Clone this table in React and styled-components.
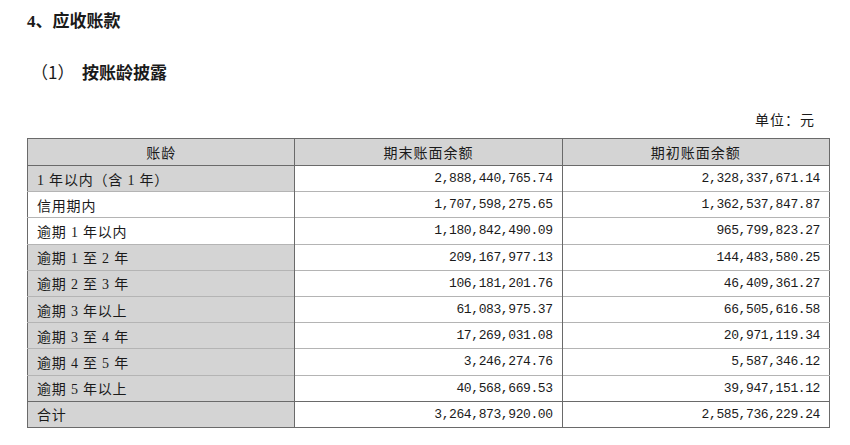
import React from "react";
import styled, { createGlobalStyle } from "styled-components";

const GlobalStyle = createGlobalStyle`
    body{
        margin:0;
        background:#ffffff;
        font-family: "Liberation Serif", "Noto Sans CJK SC", serif;
        color:#1a1a1a;
    }
`;

const rows = [
    { age: "1 年以内（含 1 年）", end: "2,888,440,765.74", begin: "2,328,337,671.14", shade: true },
    { age: "信用期内", end: "1,707,598,275.65", begin: "1,362,537,847.87", shade: false },
    { age: "逾期 1 年以内", end: "1,180,842,490.09", begin: "965,799,823.27", shade: false },
    { age: "逾期 1 至 2 年", end: "209,167,977.13", begin: "144,483,580.25", shade: true },
    { age: "逾期 2 至 3 年", end: "106,181,201.76", begin: "46,409,361.27", shade: true },
    { age: "逾期 3 年以上", end: "61,083,975.37", begin: "66,505,616.58", shade: true },
    { age: "逾期 3 至 4 年", end: "17,269,031.08", begin: "20,971,119.34", shade: true },
    { age: "逾期 4 至 5 年", end: "3,246,274.76", begin: "5,587,346.12", shade: true },
    { age: "逾期 5 年以上", end: "40,568,669.53", begin: "39,947,151.12", shade: true },
    { age: "合计", end: "3,264,873,920.00", begin: "2,585,736,229.24", shade: true, total: true },
];

export default function App() {
    return (
        <Page>
            <GlobalStyle />
            <Title>4、应收账款</Title>
            <SubTitle><span>（1）</span>按账龄披露</SubTitle>
            <Unit>单位：元</Unit>
            <Table>
                <thead>
                    <tr>
                        <Head>账龄</Head>
                        <Head>期末账面余额</Head>
                        <Head>期初账面余额</Head>
                    </tr>
                </thead>
                <tbody>
                    {rows.map((r) => (
                        <Row key={r.age} $total={r.total}>
                            <Label $shade={r.shade}>{r.age}</Label>
                            <Amount>{r.end}</Amount>
                            <Amount>{r.begin}</Amount>
                        </Row>
                    ))}
                </tbody>
            </Table>
        </Page>
    );
}

const Page = styled.div`
    width: 850px;
    height: 445px;
    padding-left: 27px;
    box-sizing: border-box;
    overflow: hidden;
`;

const Title = styled.div`
    margin-top: 12px;
    line-height: 20px;
    font-size: 17px;
    font-weight: 700;
    font-family: "Liberation Serif", "Noto Sans CJK SC", serif;
`;

const SubTitle = styled.div`
    margin-top: 30px;
    line-height: 20px;
    font-size: 17px;
    font-weight: 700;
    font-family: "Liberation Serif", "Noto Sans CJK SC", serif;
    span{
        display:inline-block;
        width: 55px;
        padding-left: 4px;
        box-sizing: border-box;
        font-weight: 400;
        font-family: "Noto Sans CJK SC", sans-serif;
    }
`;

const Unit = styled.div`
    margin-top: 27px;
    width: 803px;
    box-sizing: border-box;
    padding-right: 15px;
    text-align: right;
    line-height: 20px;
    font-size: 14px;
    letter-spacing: 1px;
`;

const Table = styled.table`
    margin-top: 7px;
    width: 803px;
    border-collapse: collapse;
    table-layout: fixed;
    border: 1.5px solid #6a6a6a;
`;

const Head = styled.th`
    height: 26px;
    padding: 0;
    background: #d4d4d4;
    font-weight: 400;
    font-size: 14px;
    letter-spacing: 1px;
    text-align: center;
    border-right: 1.5px solid #6a6a6a;
    border-bottom: 1.5px solid #6a6a6a;
    &:last-child{ border-right: none; }
`;

const Row = styled.tr`
    td{
        height: 25.2px;
        padding: 0 9px;
        border-top: 1px solid ${(p) => (p.$total ? "#6a6a6a" : "#b4b4b4")};
    }
`;

const Label = styled.td`
    background: ${(p) => (p.$shade ? "#d4d4d4" : "#ffffff")};
    font-size: 14px;
    letter-spacing: 0.8px;
    border-right: 1.5px solid #6a6a6a;
`;

const Amount = styled.td`
    text-align: right;
    font-family: "Liberation Mono", monospace;
    font-size: 13px;
    letter-spacing: -0.4px;
    border-right: 1.5px solid #6a6a6a;
    &:last-child{ border-right: none; }
`;
